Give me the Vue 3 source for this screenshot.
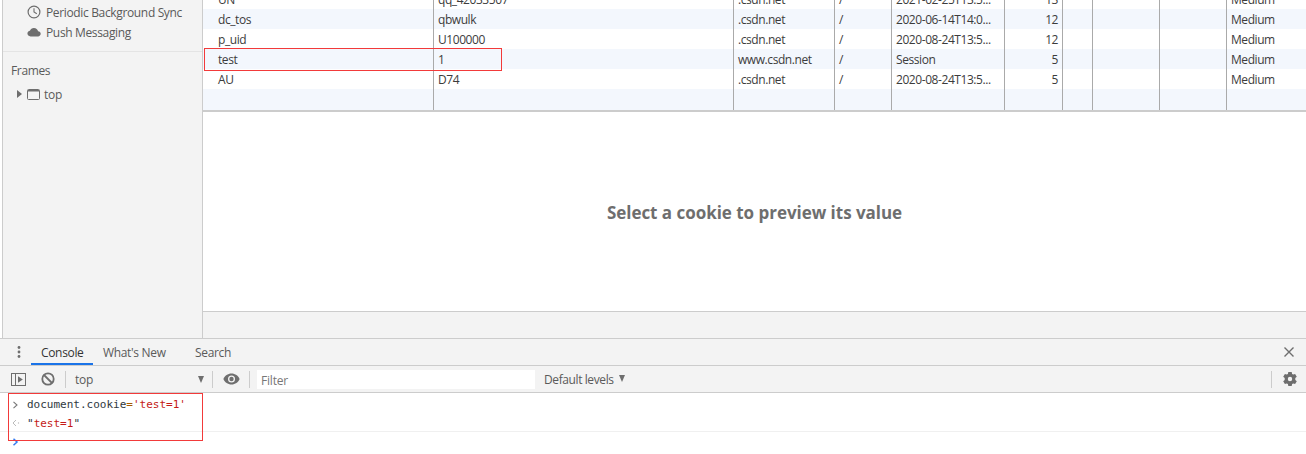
<script setup>
const rows = [
  { name: 'UN', value: 'qq_42033507', domain: '.csdn.net', path: '/', expires: '2021-02-25T13:5...', size: 13, priority: 'Medium' },
  { name: 'dc_tos', value: 'qbwulk', domain: '.csdn.net', path: '/', expires: '2020-06-14T14:0...', size: 12, priority: 'Medium' },
  { name: 'p_uid', value: 'U100000', domain: '.csdn.net', path: '/', expires: '2020-08-24T13:5...', size: 12, priority: 'Medium' },
  { name: 'test', value: '1', domain: 'www.csdn.net', path: '/', expires: 'Session', size: 5, priority: 'Medium' },
  { name: 'AU', value: 'D74', domain: '.csdn.net', path: '/', expires: '2020-08-24T13:5...', size: 5, priority: 'Medium' },
  { name: '', value: '', domain: '', path: '', expires: '', size: '', priority: '' },
]
</script>

<template>
  <div class="devtools">
    <div class="upper">
      <aside class="sidebar">
        <div class="side-group">
          <div class="side-item">
            <svg class="side-icon" width="14" height="14" viewBox="0 0 14 14">
              <circle cx="7" cy="7" r="5.9" fill="none" stroke="#6e6e6e" stroke-width="1.2" />
              <path d="M7 3.200V7l2.800 1.700" fill="none" stroke="#6e6e6e" stroke-width="1.100" />
            </svg>
            <span>Periodic Background Sync</span>
          </div>
          <div class="side-item">
            <svg class="side-icon" width="14" height="14" viewBox="0 0 14 14">
              <path d="M3.600 11.400C1.800 11.400.4 10.200.4 8.600c0-1.500 1.100-2.600 2.500-2.800C3.500 4.200 5 3 6.900 3c2.200 0 3.800 1.400 4.200 3.200 1.500.1 2.600 1.200 2.600 2.600 0 1.500-1.200 2.600-2.700 2.600z" fill="#6e6e6e" />
            </svg>
            <span>Push Messaging</span>
          </div>
        </div>
        <div class="frames">
          <div class="frames-title">Frames</div>
          <div class="frame-item">
            <span class="tri-right"></span>
            <svg width="13" height="11" viewBox="0 0 13 11">
              <rect x=".5" y=".5" width="12" height="10" rx="1" fill="none" stroke="#6e6e6e" />
              <rect x="1" y="1" width="11" height="1.500" fill="#6e6e6e" />
            </svg>
            <span>top</span>
          </div>
        </div>
      </aside>

      <main class="cookies">
        <div class="table-wrap">
          <div class="table">
            <div v-for="(r, i) in rows" :key="i" class="row">
              <div class="cell name">{{ r.name }}</div>
              <div class="cell">{{ r.value }}</div>
              <div class="cell">{{ r.domain }}</div>
              <div class="cell">{{ r.path }}</div>
              <div class="cell">{{ r.expires }}</div>
              <div class="cell size">{{ r.size }}</div>
              <div class="cell"></div>
              <div class="cell"></div>
              <div class="cell"></div>
              <div class="cell last">{{ r.priority }}</div>
            </div>
          </div>
        </div>
        <div class="preview">Select a cookie to preview its value</div>
        <div class="status"></div>
      </main>
    </div>

    <section class="drawer">
      <div class="tabbar">
        <svg class="dots" width="4" height="14" viewBox="0 0 4 14">
          <circle cx="2" cy="2.500" r="1.400" fill="#6e6e6e" />
          <circle cx="2" cy="7" r="1.400" fill="#6e6e6e" />
          <circle cx="2" cy="11.500" r="1.400" fill="#6e6e6e" />
        </svg>
        <div class="tab active">Console</div>
        <div class="tab new">What's New</div>
        <div class="tab search">Search</div>
        <svg class="close" width="12" height="12" viewBox="0 0 12 12">
          <path d="M1.500 1.500l9 9M10.500 1.500l-9 9" stroke="#6e6e6e" stroke-width="1.400" />
        </svg>
      </div>

      <div class="toolbar">
        <svg class="tool-first" width="15" height="13" viewBox="0 0 15 13">
          <rect x=".5" y=".5" width="14" height="12" fill="none" stroke="#6e6e6e" />
          <path d="M4.500 1v11" stroke="#6e6e6e" />
          <path d="M7 3.200l4.800 3.300L7 9.800z" fill="#6e6e6e" />
        </svg>
        <svg class="tool-clear" width="14" height="14" viewBox="0 0 14 14">
          <circle cx="7" cy="7" r="5.700" fill="none" stroke="#6e6e6e" stroke-width="1.800" />
          <path d="M3 3l8 8" stroke="#6e6e6e" stroke-width="1.800" />
        </svg>
        <span class="sep first-sep"></span>
        <div class="context">
          <span>top</span>
          <span class="tri-down"></span>
        </div>
        <span class="sep"></span>
        <svg class="eye" width="17" height="12" viewBox="0 0 17 12">
          <path d="M8.500.5C4.800.5 1.700 2.800.4 6c1.300 3.200 4.400 5.500 8.100 5.500s6.800-2.300 8.100-5.500C15.300 2.800 12.200.5 8.500.5z" fill="#6e6e6e" />
          <circle cx="8.500" cy="6" r="3.500" fill="#f3f3f3" />
          <circle cx="8.500" cy="6" r="2.200" fill="#6e6e6e" />
        </svg>
        <span class="sep"></span>
        <div class="filter">Filter</div>
        <div class="levels">
          <span>Default levels</span>
          <span class="tri-down small"></span>
        </div>
        <span class="sep right-sep"></span>
        <svg class="gear" width="14" height="14" viewBox="0 0 14 14">
          <path fill-rule="evenodd" d="M5.300 0h3.400l.4 2 1.100.6 1.900-.7 1.700 2.900-1.500 1.300v1.800l1.500 1.300-1.700 2.900-1.900-.7-1.100.6-.4 2H5.300l-.4-2-1.100-.6-1.900.7L.2 9.200l1.500-1.300V6.100L.2 4.800l1.700-2.900 1.900.7 1.100-.6zM7 4.800a2.200 2.200 0 1 0 0 4.400 2.200 2.200 0 0 0 0-4.400z" fill="#6e6e6e" />
        </svg>
      </div>

      <div class="console">
        <div class="line input">
          <svg class="chev" width="7" height="8" viewBox="0 0 7 8"><path d="M1.500.8L5 4 1.500 7.200" fill="none" stroke="#777" stroke-width="1.100" /></svg>
          <span>document.cookie<span class="op">=</span><span class="str">'test=1'</span></span>
        </div>
        <div class="line output">
          <svg class="chev" width="8" height="8" viewBox="0 0 8 8"><path d="M4 1L1 4l3 3" fill="none" stroke="#bbb" stroke-width="1" /><circle cx="6.500" cy="4" r=".7" fill="#bbb" /></svg>
          <span>"<span class="str">test=1</span>"</span>
        </div>
        <div class="line prompt">
          <svg class="chev" width="7" height="8" viewBox="0 0 7 8"><path d="M1.500.8L5 4 1.500 7.200" fill="none" stroke="#367cf1" stroke-width="1.500" /></svg>
        </div>
      </div>
    </section>

    <div class="mark mark-row"></div>
    <div class="mark mark-console"></div>
  </div>
</template>

<style>
html, body { margin: 0; background: #fff; overflow: hidden; }
</style>

<style scoped>
.devtools {
  position: relative;
  width: 1306px;
  height: 454px;
  overflow: hidden;
  font-family: "Open Sans", "Noto Sans", sans-serif;
  font-size: 12px;
  color: #3c3c3c;
  background: #fff;
}
.upper {
  display: flex;
  height: 338px;
  padding-left: 2px;
  box-sizing: border-box;
}
.sidebar {
  width: 201px;
  flex: none;
  box-sizing: border-box;
  background: #f3f3f3;
  border-left: 1px solid #ccc;
  border-right: 1px solid #ccc;
  color: #5a5a5a;
}
.side-group {
  padding-top: 2px;
  height: 52px;
  box-sizing: border-box;
  border-bottom: 1px solid #e4e4e4;
}
.side-item {
  display: flex;
  align-items: center;
  height: 20px;
  padding-left: 24px;
  letter-spacing: -0.35px;
}
.side-icon { margin-right: 5px; flex: none; }
.frames { padding-top: 10px; }
.frames-title { height: 18px; line-height: 18px; padding-left: 8px; letter-spacing: -0.35px; }
.frame-item {
  display: flex;
  align-items: center;
  height: 20px;
  margin-top: 4px;
  padding-left: 14px;
  letter-spacing: -0.2px;
}
.frame-item svg { margin: 0 4px 0 5px; }
.tri-right {
  width: 0;
  height: 0;
  border-left: 5px solid #6e6e6e;
  border-top: 4px solid transparent;
  border-bottom: 4px solid transparent;
}
.cookies {
  flex: 1;
  min-width: 0;
  display: flex;
  flex-direction: column;
}
.table-wrap {
  height: 112px;
  flex: none;
  overflow: hidden;
  box-sizing: border-box;
  border-bottom: 2px solid #ccc;
}
.table { margin-top: -11px; }
.row {
  display: grid;
  grid-template-columns: 231px 300px 101px 57px 113px 58px 30px 67px 67px 80px;
  height: 20px;
  line-height: 22px;
}
.row:last-child { height: 21px; }
.row:nth-child(even) { background: #f3f7fd; }
.cell {
  box-sizing: border-box;
  height: 100%;
  padding-left: 4px;
  border-right: 1px solid #aaa;
  white-space: nowrap;
  overflow: hidden;
  letter-spacing: -0.43px;
}
.cell.name { padding-left: 15px; }
.cell.size { text-align: right; padding-right: 4px; }
.cell.last { border-right: 0; }
.preview {
  flex: 1;
  display: flex;
  align-items: center;
  justify-content: center;
  padding-top: 2px;
  font-size: 17px;
  font-weight: 700;
  letter-spacing: -0.03px;
  color: #6e6e6e;
}
.status {
  flex: none;
  height: 26px;
  background: #f3f3f3;
  border-top: 1px solid #ccc;
}
.drawer { display: flex; flex-direction: column; }
.tabbar {
  display: flex;
  align-items: center;
  height: 28px;
  box-sizing: border-box;
  background: #f3f3f3;
  border-top: 1px solid #ccc;
  border-bottom: 1px solid #ccc;
  color: #5a5a5a;
}
.dots { margin-left: 17px; }
.tab {
  height: 26px;
  line-height: 27px;
  box-sizing: border-box;
  letter-spacing: -0.33px;
  white-space: nowrap;
}
.tab.active {
  width: 62px;
  margin-left: 10px;
  padding-left: 10px;
  color: #333;
  border-bottom: 2px solid #1a73e8;
}
.tab.new { margin-left: 10px; width: 92px; }
.close { margin-left: auto; margin-right: 11px; }
.toolbar {
  display: flex;
  align-items: center;
  height: 27px;
  box-sizing: border-box;
  background: #f3f3f3;
  border-bottom: 1px solid #ccc;
  color: #5a5a5a;
}
.tool-first { margin-left: 11px; }
.tool-clear { margin-left: 15px; }
.sep { width: 1px; height: 17px; background: #ccc; flex: none; }
.first-sep { margin-left: 10px; }
.context {
  width: 146px;
  box-sizing: border-box;
  padding: 0 8px 0 9px;
  display: flex;
  align-items: center;
  justify-content: space-between;
  letter-spacing: -0.2px;
}
.tri-down {
  width: 0;
  height: 0;
  border-top: 7px solid #6e6e6e;
  border-left: 3.500px solid transparent;
  border-right: 3.500px solid transparent;
}
.eye { margin: 0 9px 0 10px; }
.filter {
  margin-left: 7px;
  width: 278px;
  height: 19px;
  line-height: 21px;
  padding-left: 4px;
  box-sizing: border-box;
  background: #fff;
  color: #777;
  letter-spacing: -0.2px;
}
.levels {
  margin-left: 9px;
  display: flex;
  align-items: center;
  gap: 5px;
  letter-spacing: -0.4px;
}
.tri-down.small { margin-top: -1px; }
.right-sep { margin-left: auto; margin-right: 11px; }
.gear { margin-right: 9px; }
.console {
  font-family: "DejaVu Sans Mono", "Liberation Mono", monospace;
  font-size: 11px;
  color: #303942;
}
.line {
  display: flex;
  align-items: center;
  padding-left: 27px;
  position: relative;
  box-sizing: border-box;
}
.line .chev { position: absolute; left: 12px; }
.line.input { height: 21px; padding-top: 1px; }
.line.input .chev { top: 8px; }
.line.output { height: 18px; padding-top: 1px; border-bottom: 1px solid #f0f0f0; }
.line.prompt { height: 17px; }
.line.prompt .chev { top: 6px; }
.str { color: #c41a16; }
.op { color: #a65a00; }
.mark {
  position: absolute;
  border: 1px solid #f23a3a;
  box-sizing: border-box;
  pointer-events: none;
}
.mark-row { left: 204px; top: 48px; width: 298px; height: 23px; }
.mark-console { left: 8px; top: 393px; width: 195px; height: 48px; }
</style>
